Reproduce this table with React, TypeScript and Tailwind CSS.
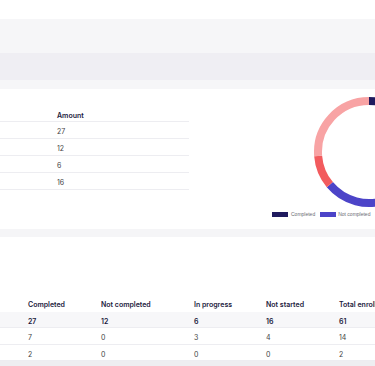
import React from "react";

const segs = [
  { v: 27, c: "#1f1a5e" },
  { v: 12, c: "#4c44c8" },
  { v: 6, c: "#f25b5e" },
  { v: 16, c: "#f8a3a4" },
];

function arc(cx: number, cy: number, r: number, a0: number, a1: number) {
  const p = (a: number) => [cx + r * Math.sin(a), cy - r * Math.cos(a)];
  const [x0, y0] = p(a0);
  const [x1, y1] = p(a1);
  const large = a1 - a0 > Math.PI ? 1 : 0;
  return `M ${x0} ${y0} A ${r} ${r} 0 ${large} 1 ${x1} ${y1}`;
}

function Donut() {
  const total = segs.reduce((s, x) => s + x.v, 0);
  let acc = 0;
  return (
    <svg width="112" height="112" viewBox="0 0 112 112" className="absolute left-[124px] top-[7px]">
      {segs.map((s, i) => {
        const a0 = (acc / total) * Math.PI * 2;
        acc += s.v;
        const a1 = (acc / total) * Math.PI * 2;
        return <path key={i} d={arc(56, 56, 51, a0, a1)} fill="none" stroke={s.c} strokeWidth={8} />;
      })}
    </svg>
  );
}

export default function App() {
  const amounts = ["27", "12", "6", "16"];
  const rows = [
    ["27", "12", "6", "16", "61"],
    ["7", "0", "3", "4", "14"],
    ["2", "0", "0", "0", "2"],
  ];
  const heads = ["Completed", "Not completed", "In progress", "Not started", "Total enrollments"];
  return (
    <div
      className="w-[375px] h-[366px] overflow-hidden bg-white flex flex-col"
      style={{ fontFamily: "Inter, 'Open Sans', sans-serif" }}
    >
      <div className="h-[19px] shrink-0 bg-white" />
      <div className="h-[34px] shrink-0 bg-[#f6f6f8]" />
      <div className="h-[27px] shrink-0 bg-[#efeef3]" />
      <div className="h-[9px] shrink-0 bg-[#f6f6f8]" />
      <div className="h-[140px] shrink-0 bg-white flex relative">
        <div className="w-[189px] flex flex-col">
          <div className="h-[33px] flex items-end pb-[0px] pl-[57px] border-b border-[#ededf1] text-[7px] font-semibold text-[#1c1a3d]">
            Amount
          </div>
          {amounts.map((a, i) => (
            <div key={i} className="h-[17px] flex items-center pt-[4px] pl-[57px] border-b border-[#ededf1] text-[7px] text-[#444]">
              {a}
            </div>
          ))}
        </div>
        <div className="flex-1 relative">
          <Donut />
          <div
            className="absolute left-[83px] top-[122px] flex items-center text-[5px] text-[#6b6b73] whitespace-nowrap"
            style={{ fontFamily: "'Liberation Sans', Arial, sans-serif" }}
          >
            <span className="w-[16px] h-[5px] bg-[#1f1a5e] mr-[3px]" />
            <span className="mr-[5px]">Completed</span>
            <span className="w-[16px] h-[5px] bg-[#4c44c8] mr-[2px]" />
            <span>Not completed</span>
          </div>
        </div>
      </div>
      <div className="h-[8px] shrink-0 bg-[#f5f5f7]" />
      <div className="h-[124px] shrink-0 bg-white flex flex-col justify-end">
        <div className="grid grid-cols-[28px_73px_93px_72px_73px_100px] h-[16px] items-center pt-[4px] text-[7px] font-semibold text-[#1c1a3d] whitespace-nowrap">
          <div />
          {heads.map((h) => (
            <div key={h}>{h}</div>
          ))}
        </div>
        {rows.map((r, i) => (
          <div
            key={i}
            className={`grid grid-cols-[28px_73px_93px_72px_73px_100px] h-[16.5px] items-center pt-[5px] text-[7px] border-b border-[#ededf1] whitespace-nowrap ${
              i === 0 ? "bg-[#f7f7f9] font-semibold text-[#1c1a3d]" : "text-[#444]"
            }`}
          >
            <div />
            {r.map((v, j) => (
              <div key={j}>{v}</div>
            ))}
          </div>
        ))}
      </div>
      <div className="flex-1 bg-[#eeeef1]" />
    </div>
  );
}
